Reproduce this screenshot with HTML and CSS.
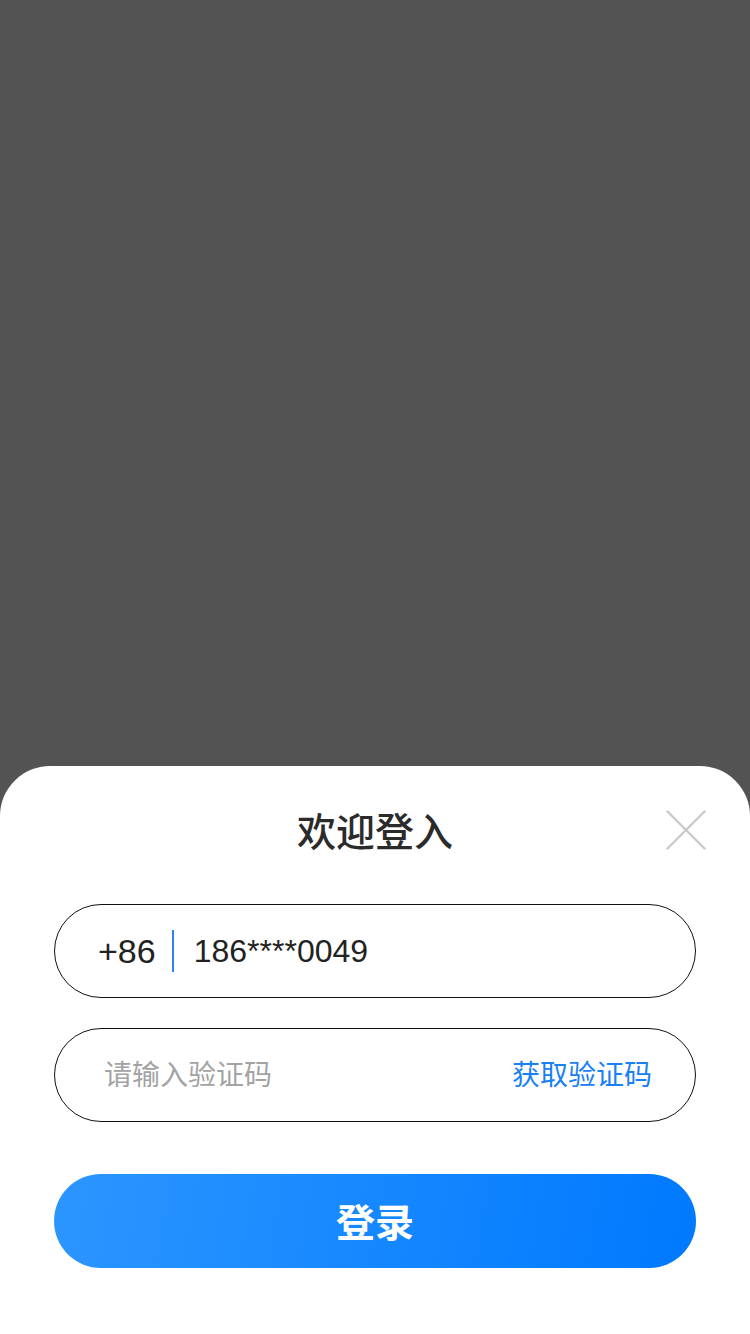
FILE: index.html
```html
<!DOCTYPE html>
<html lang="zh-CN">
<head>
<meta charset="utf-8">
<title>欢迎登入</title>
<link rel="stylesheet" href="styles.css">
</head>
<body>
<div class="page">
  <div class="backdrop"></div>
  <div class="sheet">
    <div class="sheet-header">
      <h1 class="title">欢迎登入</h1>
      <button class="close" aria-label="关闭">
        <svg width="40" height="40" viewBox="0 0 40 40">
          <path d="M1.5 1.5 L38.5 38.5 M38.5 1.5 L1.5 38.5" stroke="#c9c9c9" stroke-width="2.4" stroke-linecap="round" fill="none"/>
        </svg>
      </button>
    </div>
    <div class="form">
      <div class="field field-phone">
        <span class="prefix">+86</span>
        <span class="divider"></span>
        <span class="phone">186****0049</span>
      </div>
      <div class="field field-code">
        <span class="placeholder">请输入验证码</span>
        <span class="get-code">获取验证码</span>
      </div>
      <button class="submit">登录</button>
    </div>
  </div>
</div>
</body>
</html>
```

FILE: styles.css
```css
* {
  box-sizing: border-box;
}

html, body {
  margin: 0;
  padding: 0;
  background: #535353;
}

body {
  font-family: "Liberation Sans", "Noto Sans CJK SC", sans-serif;
}

.page {
  width: 750px;
  height: 1334px;
  display: flex;
  flex-direction: column;
}

.backdrop {
  height: 766px;
  flex: none;
}

.sheet {
  flex: 1;
  background: #ffffff;
  border-radius: 50px 50px 0 0;
  display: flex;
  flex-direction: column;
}

.sheet-header {
  position: relative;
  padding-top: 35px;
  height: 138px;
  display: flex;
  justify-content: center;
}

.title {
  margin: 0;
  font-family: "Noto Sans CJK SC", sans-serif;
  font-size: 39px;
  font-weight: 500;
  line-height: 56px;
  height: 56px;
  color: #2b2b2b;
}

.close {
  position: absolute;
  top: 44px;
  left: 666px;
  width: 40px;
  height: 40px;
  padding: 0;
  border: none;
  background: transparent;
  display: flex;
}

.form {
  padding: 0 54px;
  display: flex;
  flex-direction: column;
}

.field {
  height: 94px;
  border: 1px solid #111111;
  border-radius: 47px;
  display: flex;
  align-items: center;
}

.field-phone {
  padding-left: 43px;
}

.prefix {
  font-size: 34px;
  color: #222222;
  line-height: 1;
}

.divider {
  width: 2px;
  height: 42px;
  background: #2f7ff5;
  margin: 0 20px 0 16px;
}

.phone {
  font-size: 32px;
  color: #222222;
  line-height: 1;
}

.field-code {
  margin-top: 30px;
  padding: 0 43px 4px 49px;
  justify-content: space-between;
  font-family: "Noto Sans CJK SC", sans-serif;
  font-size: 28px;
}

.placeholder {
  color: #a3a3a3;
}

.get-code {
  color: #1a80f6;
}

.submit {
  margin-top: 52px;
  height: 94px;
  border: none;
  border-radius: 47px;
  background: linear-gradient(100deg, #2c96ff 0%, #0079fe 100%);
  color: #ffffff;
  font-family: "Noto Sans CJK SC", sans-serif;
  font-size: 39px;
  font-weight: 700;
  padding: 0 0 3px 0;
}
```
